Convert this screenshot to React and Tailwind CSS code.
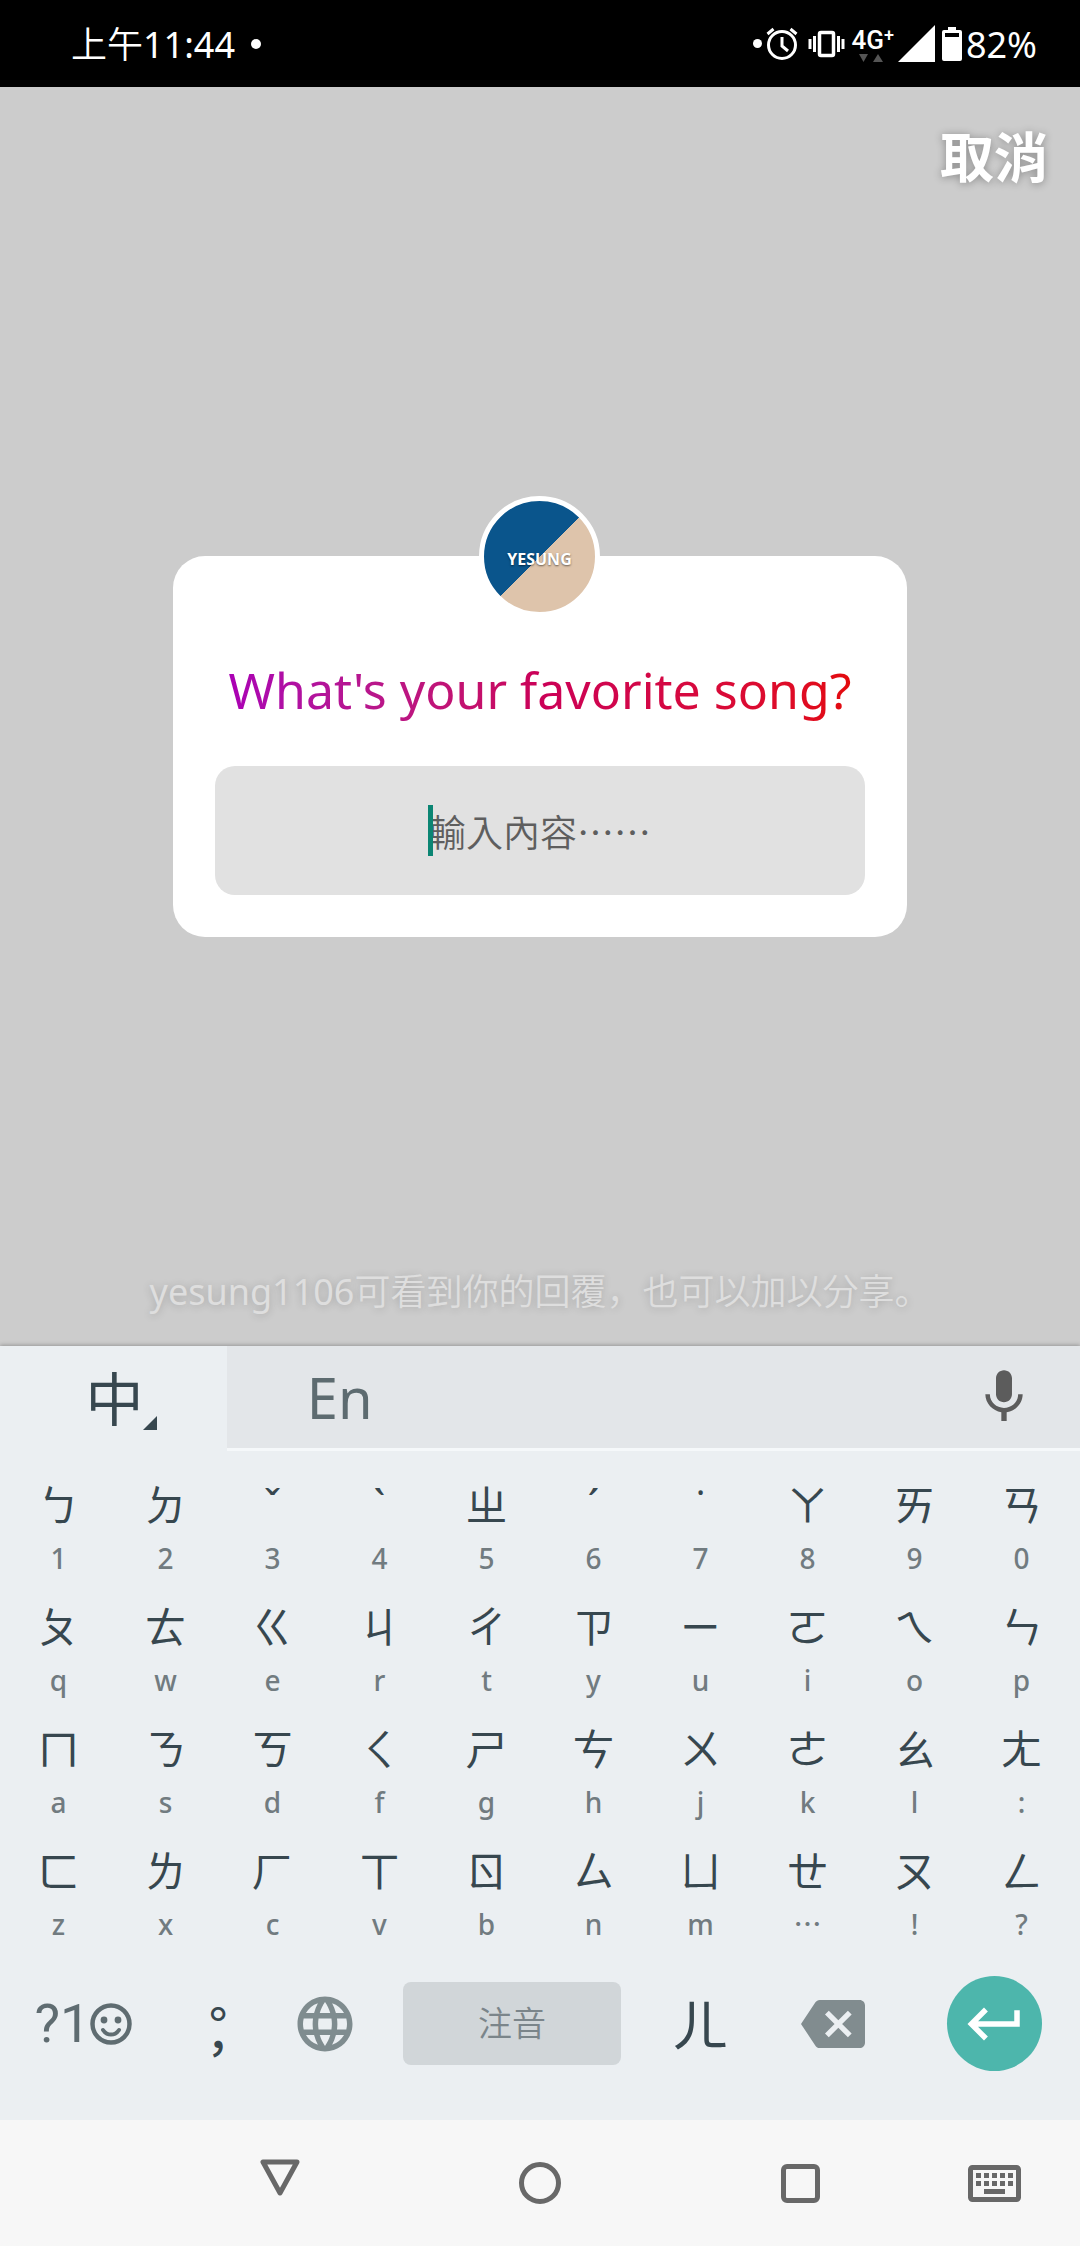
import { useState } from "react";
import { MdBackspace, MdKeyboardReturn, MdLanguage, MdMic } from "react-icons/md";

const KEY_ROWS = [
  [["ㄅ", "1"], ["ㄉ", "2"], ["ˇ", "3"], ["ˋ", "4"], ["ㄓ", "5"], ["ˊ", "6"], ["˙", "7"], ["ㄚ", "8"], ["ㄞ", "9"], ["ㄢ", "0"]],
  [["ㄆ", "q"], ["ㄊ", "w"], ["ㄍ", "e"], ["ㄐ", "r"], ["ㄔ", "t"], ["ㄗ", "y"], ["ㄧ", "u"], ["ㄛ", "i"], ["ㄟ", "o"], ["ㄣ", "p"]],
  [["ㄇ", "a"], ["ㄋ", "s"], ["ㄎ", "d"], ["ㄑ", "f"], ["ㄕ", "g"], ["ㄘ", "h"], ["ㄨ", "j"], ["ㄜ", "k"], ["ㄠ", "l"], ["ㄤ", ":"]],
  [["ㄈ", "z"], ["ㄌ", "x"], ["ㄏ", "c"], ["ㄒ", "v"], ["ㄖ", "b"], ["ㄙ", "n"], ["ㄩ", "m"], ["ㄝ", "⋯"], ["ㄡ", "!"], ["ㄥ", "?"]],
];

const AlarmIcon = () => (
  <svg className="w-8 h-[34px]" viewBox="0 0 32 34" fill="none" stroke="currentColor" strokeWidth="3">
    <circle cx="16" cy="18" r="13.5" />
    <path d="M16 10v9l6 5M1.5 7l6-5M30.5 7l-6-5" />
  </svg>
);

const VibrateIcon = () => (
  <svg className="w-[37px] h-7" viewBox="0 0 37 28" fill="none" stroke="currentColor" strokeWidth="3">
    <rect x="11.5" y="2.5" width="14" height="23" rx="1.5" strokeWidth="3.5" />
    <path d="M2 9v10M6.500 6v16M30.500 6v16M35 9v10" />
  </svg>
);

const NetworkLabel = () => (
  <div className="flex flex-col">
    <div className="flex items-start font-[Roboto,sans-serif] font-medium">
      <span className="text-[26px] leading-[28px]">4G</span>
      <span className="text-[18px] leading-[18px]">+</span>
    </div>
    <svg className="w-[26px] h-2 ml-2" viewBox="0 0 26 8" fill="#555">
      <path d="M0 0h9l-4.500 8zM14 8h10l-5-8z" />
    </svg>
  </div>
);

const SignalIcon = () => (
  <svg className="w-[37px] h-[37px]" viewBox="0 0 37 37" fill="currentColor">
    <path d="M37 0v37H0z" />
  </svg>
);

const BatteryIcon = () => (
  <svg className="w-5 h-[34px]" viewBox="0 0 20 34" fill="currentColor" fillRule="evenodd">
    <path d="M6 0h8v3h4a2 2 0 0 1 2 2v27a2 2 0 0 1-2 2H2a2 2 0 0 1-2-2V5a2 2 0 0 1 2-2h4zM3 6v4h14V6z" />
  </svg>
);

const StatusBar = () => (
  <header className="h-[87px] shrink-0 bg-black text-white flex items-center justify-between pl-[71px] pr-[43px] text-[36px] leading-[52px]">
    <div className="flex items-center gap-4">
      <span className="pt-[2px]">
        <span className="font-[350]">上午</span>11:44
      </span>
      <span className="w-[10px] h-[10px] rounded-full bg-white"></span>
    </div>
    <div className="flex items-center">
      <span className="w-[9px] h-[9px] rounded-full bg-white mr-1"></span>
      <AlarmIcon />
      <div className="w-[10px]"></div>
      <VibrateIcon />
      <div className="w-[6px]"></div>
      <NetworkLabel />
      <div className="w-1"></div>
      <SignalIcon />
      <div className="w-[7px]"></div>
      <BatteryIcon />
      <span className="ml-1 pt-[2px]">82%</span>
    </div>
  </header>
);

const QuestionCard = () => {
  const [answer, setAnswer] = useState("");

  return (
    <section className="relative w-[68%] bg-white rounded-[32px] px-[42px] pt-[98px] pb-[42px] flex flex-col items-center gap-10">
      {/* avatar sits half way over the top edge */}
      <div className="absolute left-1/2 -top-[60px] -ml-[61px] w-[121px] h-[121px] rounded-full border-[5px] border-white bg-[linear-gradient(135deg,#0a558c_50%,#dec4ab_50%)] flex items-center justify-center">
        <span className="text-[16px] leading-5 pt-1 font-bold text-white text-shadow-[0_1px_2px_#0008]">YESUNG</span>
      </div>
      <label
        htmlFor="answer"
        className="text-[50px] leading-[72px] whitespace-nowrap text-transparent bg-clip-text bg-linear-to-r from-[#aa00b4] via-[#cb0057] to-[#e30b0b]"
      >
        What's your favorite song?
      </label>
      <div className="relative w-full">
        <input
          id="answer"
          type="text"
          value={answer}
          onChange={(e) => setAnswer(e.target.value)}
          placeholder="輸入內容……"
          className="block w-full h-[129px] rounded-[20px] bg-[#e1e1e1] text-center text-[37px] font-[350] text-[#5e5e5e] placeholder:text-[#5e5e5e] caret-[#0b8573] outline-none font-['Noto_Sans_CJK_TC',sans-serif]"
        />
        {!answer && <span className="absolute left-1/2 -ml-28 top-[39px] w-[5px] h-[51px] bg-[#0b8573]"></span>}
      </div>
    </section>
  );
};

const Key = ({ symbol, hint }) => (
  <button type="button" className="flex flex-col items-center gap-3">
    <span className="text-[42px] leading-[42px] text-[#37474f]">{symbol}</span>
    <span className="text-[28px] leading-[40px] text-[#717b80] font-medium">{hint}</span>
  </button>
);

const Keyboard = () => (
  <section className="bg-[#ebeff2] shadow-[0_-1px_4px_#0004] pb-[49px]">
    <div className="flex h-[105px]">
      <button type="button" className="w-[21%] flex items-center justify-center text-[#37474f]">
        <span className="text-[58px] leading-[64px] ml-4">中</span>
        <svg className="w-[14px] h-[14px] mt-12" viewBox="0 0 14 14" fill="currentColor">
          <path d="M14 0v14H0z" />
        </svg>
      </button>
      <div className="flex-1 flex items-center justify-between bg-[#e3e6e9] border-b-[3px] border-[#f5f8fa] pl-20 pr-11">
        <button type="button" className="text-[56px] leading-[72px] text-[#5d6b70]">
          En
        </button>
        <button type="button" aria-label="Voice input">
          <MdMic className="w-16 h-16 text-[#5c5c5c]" />
        </button>
      </div>
    </div>

    <div className="px-[5px] pt-[33px] flex flex-col gap-7">
      {KEY_ROWS.map((row, i) => (
        <div key={i} className="grid grid-cols-10">
          {row.map(([symbol, hint]) => (
            <Key key={symbol} symbol={symbol} hint={hint} />
          ))}
        </div>
      ))}
    </div>

    <div className="mt-8 grid grid-cols-[167fr_102fr_112fr_262fr_114fr_152fr_171fr] items-center justify-items-center">
      <button type="button" className="flex items-center text-[#5f6c71]">
        <span className="font-[Roboto,sans-serif] text-[54px] leading-[64px]">?1</span>
        <svg className="w-[42px] h-[42px]" viewBox="0 0 42 42" fill="none" stroke="currentColor" strokeWidth="4.500">
          <circle cx="21" cy="21" r="18.500" />
          <path d="M13 27c4 6 12 6 16 0" strokeLinecap="round" strokeWidth="4" />
          <circle cx="14" cy="17" r="3.400" fill="currentColor" stroke="none" />
          <circle cx="28" cy="17" r="3.400" fill="currentColor" stroke="none" />
        </svg>
      </button>
      <button
        type="button"
        className="pt-2 whitespace-pre-line font-['Noto_Sans_CJK_TC',sans-serif] text-[46px] leading-[34px] font-medium text-[#37474f]"
      >
        {"。\n，"}
      </button>
      <button type="button" aria-label="Change language">
        <MdLanguage className="w-[66px] h-[66px] text-[#7f8c8f]" />
      </button>
      <button type="button" className="w-[218px] h-[83px] rounded-lg bg-[#d1d6d9] text-[#7b858a] text-[34px] font-[350]">
        注音
      </button>
      <button type="button" className="text-[56px] leading-[64px] text-[#37474f]">
        ㄦ
      </button>
      <button type="button" aria-label="Backspace">
        <MdBackspace className="w-16 h-16 text-[#818c8f]" />
      </button>
      <button
        type="button"
        aria-label="Enter"
        className="w-[95px] h-[95px] rounded-full bg-[#4db6ac] flex items-center justify-center"
      >
        <MdKeyboardReturn className="w-[66px] h-[66px] text-white" />
      </button>
    </div>
  </section>
);

const NavBar = () => (
  <nav className="h-[126px] bg-[#f7f7f7] text-[#686868] grid grid-cols-[150fr_260fr_260fr_260fr_129fr_21fr] items-center justify-items-center">
    <div></div>
    <button type="button" aria-label="Back" className="mb-3">
      <svg className="w-10 h-[37px]" viewBox="0 0 40 37" fill="none" stroke="currentColor" strokeWidth="5" strokeLinejoin="round">
        <path d="M3 3h34L20 34z" />
      </svg>
    </button>
    <button type="button" aria-label="Home" className="w-[42px] h-[42px] rounded-full border-[5px] border-current"></button>
    <button type="button" aria-label="Recent apps" className="w-[39px] h-[39px] rounded-md border-[5px] border-current"></button>
    <button type="button" aria-label="Choose keyboard">
      <svg className="w-[53px] h-[37px]" viewBox="0 0 53 37" fill="currentColor">
        <rect x="2.500" y="2.500" width="48" height="32" rx="2" fill="none" stroke="currentColor" strokeWidth="5" />
        <path d="M8 8h5v5H8zM16 8h5v5h-5zM24 8h5v5h-5zM32 8h5v5h-5zM40 8h5v5h-5zM8 16h5v5H8zM16 16h5v5h-5zM24 16h5v5h-5zM32 16h5v5h-5zM40 16h5v5h-5zM16 24h21v5H16z" />
      </svg>
    </button>
  </nav>
);

const App = () => (
  <div lang="zh-Hant" className="min-h-screen flex flex-col bg-[#cccccc] font-['Noto_Sans','Noto_Sans_CJK_TC',sans-serif]">
    <StatusBar />
    <main className="flex-1 flex flex-col items-center">
      <button
        type="button"
        className="self-end mt-[34px] mr-8 text-[54px] leading-[72px] font-bold text-white text-shadow-[0_1px_8px_#0005]"
      >
        取消
      </button>
      <div className="w-full mt-[363px] mb-10 flex justify-center">
        <QuestionCard />
      </div>
      {/* the Japanese forms keep the comma and full stop at the lower left */}
      <p
        lang="ja"
        className="mt-auto mb-7 text-[36px] leading-[52px] font-[350] text-[#dedede] text-shadow-[0_1px_8px_#0003] font-['Noto_Sans','Noto_Sans_CJK_JP',sans-serif]"
      >
        <span className="font-normal">yesung1106</span>可看到你的回覆，也可以加以分享。
      </p>
    </main>
    <Keyboard />
    <NavBar />
  </div>
);

export default App;
